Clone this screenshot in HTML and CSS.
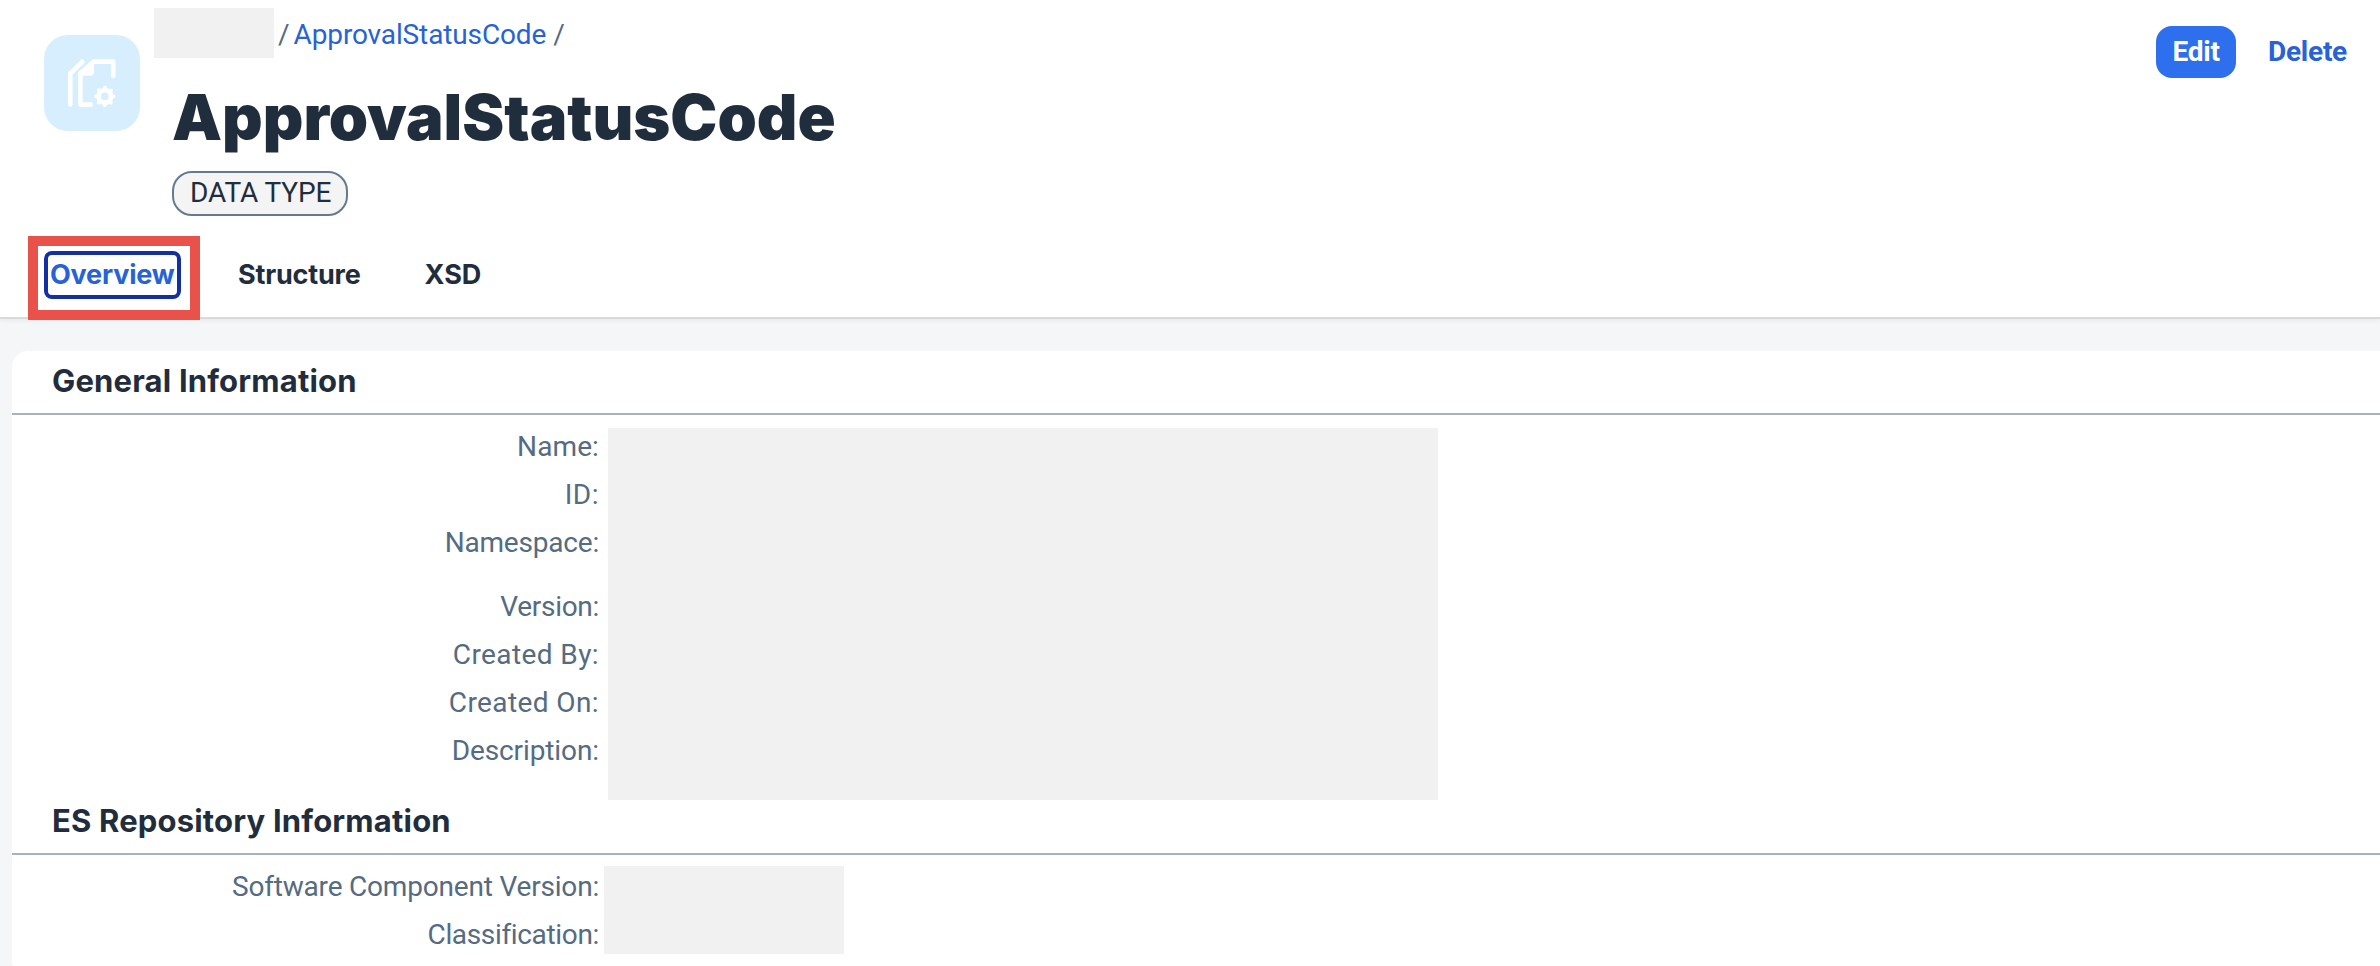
FILE: index.html
```
<!DOCTYPE html>
<html lang="en">
<head>
<meta charset="utf-8">
<title>ApprovalStatusCode</title>
<link rel="stylesheet" href="styles.css">
</head>
<body>
<header class="header">
  <div class="header-top">
    <div class="avatar">
      <svg width="96" height="96" viewBox="0 0 96 96" fill="none" stroke="#fff" stroke-width="4.6" stroke-linecap="round" stroke-linejoin="round" aria-hidden="true">
        <path d="M26.3 69.5V38.5L38.3 26.8"/>
        <path d="M46.8 69.6H36.4V38.3L49.8 26.6H69.2V41"/>
        <path d="M38 38.7L48 29V36.4Q48 38.7 45.7 38.7Z" fill="#fff" stroke-width="4"/>
        <circle cx="60.8" cy="61.4" r="6.2" stroke-width="4.8"/>
        <circle cx="60.8" cy="61.4" r="8.8" stroke-width="3.8" stroke-dasharray="0.01 6.902"/>
      </svg>
    </div>
    <div class="heading">
      <nav class="crumbs">
        <span class="crumb-blank"></span>
        <span class="slash">/</span>
        <a class="crumb-link">ApprovalStatusCode</a>
        <span class="slash">/</span>
      </nav>
      <h1 class="title">ApprovalStatusCode</h1>
      <span class="tag">DATA TYPE</span>
    </div>
    <div class="actions">
      <button class="btn btn-primary">Edit</button>
      <button class="btn">Delete</button>
    </div>
  </div>
  <nav class="tabs">
    <div class="marker"><a class="tab tab-active">Overview</a></div>
    <a class="tab tab-structure">Structure</a>
    <a class="tab tab-xsd">XSD</a>
  </nav>
</header>
<main class="panel">
  <section>
    <h2 class="section-title">General Information</h2>
    <div class="section-body">
      <div class="labels">
        <div class="label name">Name:</div>
        <div class="label id">ID:</div>
        <div class="label namespace">Namespace:</div>
        <div class="label group version">Version:</div>
        <div class="label created">Created By:</div>
        <div class="label created">Created On:</div>
        <div class="label description">Description:</div>
      </div>
      <div class="values values-general"></div>
    </div>
  </section>
  <section>
    <h2 class="section-title">ES Repository Information</h2>
    <div class="section-body">
      <div class="labels">
        <div class="label component">Software Component Version:</div>
        <div class="label classification">Classification:</div>
      </div>
      <div class="values values-repository"></div>
    </div>
  </section>
</main>
</body>
</html>
```
FILE: styles.css
```
* { box-sizing: border-box; }

body {
  margin: 0;
  height: 966px;
  overflow: hidden;
  background: #f5f6f7;
  color: #1f2d3d;
  font: 400 28px Roboto, "Liberation Sans", sans-serif;
}

.header {
  height: 319px;
  background: #fff;
  border-bottom: 2px solid #d9d9d9;
  box-shadow: 0 2px 4px rgba(0, 0, 0, 0.05);
}

.header-top {
  display: flex;
  height: 236px;
  padding-left: 44px;
}

.avatar {
  width: 96px;
  height: 96px;
  margin-top: 35px;
  border-radius: 24px;
  background: #d6eefd;
}
.avatar svg { display: block; }

.heading {
  margin-left: 14px;
  padding-top: 8px;
}

.crumbs {
  display: flex;
  height: 50px;
  line-height: 54px;
}
.crumb-blank {
  width: 120px;
  height: 50px;
  margin-right: 4px;
  background: #f1f1f1;
}
.slash { color: #556b82; }
.crumb-link {
  margin: 0 7px 0 4px;
  color: #2762d6;
  letter-spacing: -0.13px;
}

.title {
  margin: 19px 0 0 18px;
  font: 900 63px/80px Inter, sans-serif;
}

.tag {
  display: block;
  width: 176px;
  height: 45px;
  margin: 14px 0 0 18px;
  padding-left: 16px;
  border: 2px solid #667a8e;
  border-radius: 20px;
  background: #f4f4f4;
  line-height: 39px;
  white-space: nowrap;
  letter-spacing: -0.1px;
}

.actions {
  display: flex;
  gap: 9px;
  margin: 26px 11px 0 auto;
}
.btn {
  height: 52px;
  padding: 0 22px;
  border: 0;
  border-radius: 16px;
  background: none;
  color: #2762d6;
  font: 700 28px/52px Roboto, sans-serif;
  letter-spacing: -0.25px;
}
.btn-primary {
  width: 80px;
  margin-right: 1px;
  padding: 0;
  background: #2d6fec;
  color: #fff;
}

.tabs {
  display: flex;
  height: 84px;
  padding-left: 28px;
  font: 700 27px/48px Inter, sans-serif;
}
.marker {
  position: relative;
  z-index: 1;
  width: 172px;
  height: 84px;
  padding: 5px 6px;
  border: 10px solid #e9524a;
}
.tab { letter-spacing: -0.2px; }
.tab-active {
  display: block;
  width: 137px;
  height: 48px;
  padding-left: 2px;
  border: 4px solid #1230a3;
  border-radius: 8px;
  color: #2762d6;
  line-height: 40px;
}
.tab-structure,
.tab-xsd { padding-top: 15px; }
.tab-structure { margin-left: 38px; }
.tab-xsd { margin-left: 64px; letter-spacing: 0; }

.panel {
  height: 625px;
  margin: 32px 0 0 12px;
  border-radius: 16px 0 0 16px;
  background: #fff;
}

.section-title {
  height: 64px;
  margin: 0;
  padding-left: 40px;
  border-bottom: 2px solid #a8b2bd;
  font: 700 31px/59px Inter, sans-serif;
  letter-spacing: 0.18px;
}

.section-body {
  display: flex;
  align-items: flex-start;
  padding-top: 7px;
}
.labels {
  width: 588px;
  padding-right: 1px;
  color: #556b82;
  text-align: right;
}
.label {
  height: 48px;
  line-height: 50px;
}
.group { margin-top: 16px; }
.name { letter-spacing: 0.1px; }
.id { letter-spacing: 0.5px; }
.namespace { letter-spacing: -0.2px; }
.version { letter-spacing: -0.3px; }
.created { letter-spacing: 0.4px; }
.description { letter-spacing: -0.1px; }
.component { letter-spacing: -0.19px; }
.classification { letter-spacing: -0.34px; }

.values { background: #f1f1f1; }
.values-general {
  width: 830px;
  height: 372px;
  margin: 6px 0 -9px 8px;
}
.values-repository {
  width: 240px;
  height: 88px;
  margin: 4px 0 0 4px;
}
```
